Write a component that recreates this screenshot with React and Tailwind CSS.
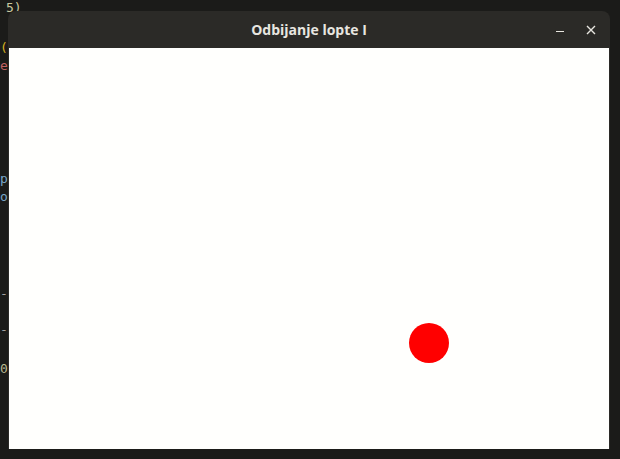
export default function App() {
  return (
    <div className="relative w-[620px] h-[459px] overflow-hidden bg-[#1b1b19]" style={{ fontFamily: '"DejaVu Sans Mono", monospace' }}>
      <span className="absolute left-[6px] top-[1px] text-[13px] leading-none text-[#c8c8a0]">5)</span>
      <span className="absolute left-[0px] top-[41px] text-[13px] leading-none text-[#d4b020]">(</span>
      <span className="absolute left-[0px] top-[59px] text-[13px] leading-none text-[#c06060]">e</span>
      <span className="absolute left-[0px] top-[172px] text-[13px] leading-none text-[#7aa6c8]">p</span>
      <span className="absolute left-[0px] top-[190px] text-[13px] leading-none text-[#7aa6c8]">o</span>
      <span className="absolute left-[0px] top-[287px] text-[13px] leading-none text-[#a0a0a0]">-</span>
      <span className="absolute left-[0px] top-[323px] text-[13px] leading-none text-[#a0a0a0]">-</span>
      <span className="absolute left-[0px] top-[362px] text-[13px] leading-none text-[#b8b890]">0</span>

      <div className="absolute left-[8px] top-[11px] w-[602px] h-[438px] flex flex-col rounded-t-[8px] overflow-hidden bg-[#2b2a27]">
        <div className="relative h-[37px] shrink-0 flex items-center justify-center">
          <span className="text-[14px] font-bold text-[#e8e6e0]" style={{ fontFamily: '"Open Sans", "Noto Sans", sans-serif' }}>Odbijanje lopte I</span>
          <div className="absolute right-[12px] top-0 h-full flex items-center gap-[22px]">
            <div className="w-[8px] h-[1.5px] bg-[#e8e6e0] mt-[4px]" />
            <svg width="10" height="10" viewBox="0 0 10 10" className="mr-[2px]">
              <path d="M1 1 L9 9 M9 1 L1 9" stroke="#e8e6e0" strokeWidth="1.4" />
            </svg>
          </div>
        </div>
        <div className="flex-1 mx-[1px] bg-[#fffffd] relative">
          <div className="absolute left-[400px] top-[275px] w-[40px] h-[40px] rounded-full bg-[#ff0000]" />
        </div>
      </div>
    </div>
  );
}
